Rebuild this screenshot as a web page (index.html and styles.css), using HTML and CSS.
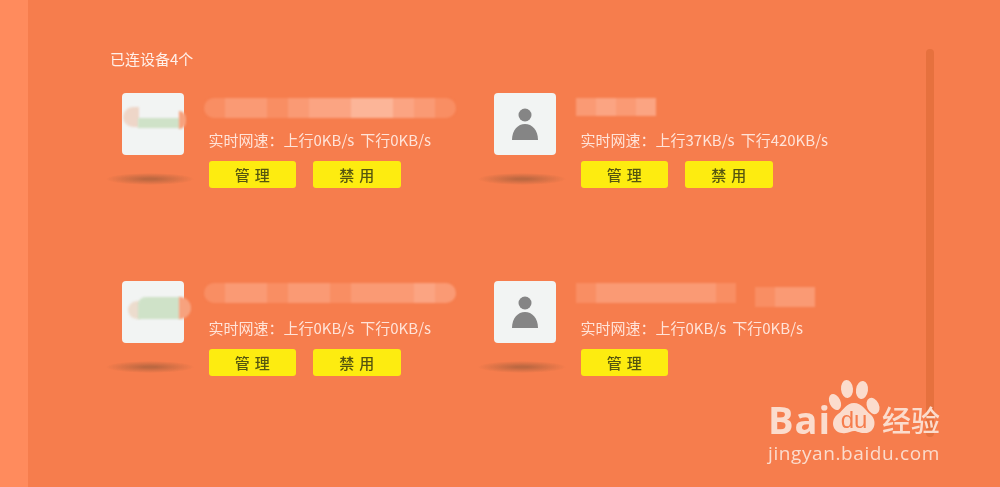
FILE: index.html
```html
<!DOCTYPE html>
<html>

<head>
  <title>已连设备</title>
  <meta name="viewport" content="width=device-width, initial-scale=1">
  <link rel="stylesheet" href="styles.css">
</head>

<body>
  <div class="strip"></div>
  <div class="main">
    <div class="content">
      <h1 class="count">已连设备4个</h1>
      <div class="devices">

        <div class="device">
          <div class="avatar-col">
            <div class="avatar">
              <span class="thumb-a"></span><span class="thumb-b"></span><span class="thumb-c"></span>
            </div>
            <div class="shadow"></div>
          </div>
          <div class="info">
            <div class="name name-one"><i class="l1"></i><i class="l2"></i><i class="l2"></i><i class="l1"></i><i class="l2"></i><i class="l3"></i><i class="l3"></i><i class="l4"></i><i class="l4"></i><i class="l3"></i><i class="l2"></i><i class="l1"></i></div>
            <p class="speed"><span>实时网速：</span><span>上行0KB/s</span><span class="down">下行0KB/s</span></p>
            <div class="actions"><button>管理</button><button>禁用</button></div>
          </div>
        </div>

        <div class="device">
          <div class="avatar-col">
            <div class="avatar">
              <svg class="person" viewBox="0 0 26 32"><circle cx="13" cy="7" r="6.5"/><path d="M0 32C0 22 6 16 13 16S26 22 26 32Z"/></svg>
            </div>
            <div class="shadow"></div>
          </div>
          <div class="info">
            <div class="name name-two"><i class="l2"></i><i class="l3"></i><i class="l2"></i><i class="l3"></i></div>
            <p class="speed"><span>实时网速：</span><span>上行37KB/s</span><span class="down">下行420KB/s</span></p>
            <div class="actions"><button>管理</button><button>禁用</button></div>
          </div>
        </div>

        <div class="device">
          <div class="avatar-col">
            <div class="avatar">
              <span class="thumb-d"></span><span class="thumb-e"></span><span class="thumb-f"></span>
            </div>
            <div class="shadow"></div>
          </div>
          <div class="info">
            <div class="name name-one name-up"><i class="l1"></i><i class="l2"></i><i class="l2"></i><i class="l1"></i><i class="l2"></i><i class="l2"></i><i class="l1"></i><i class="l2"></i><i class="l2"></i><i class="l2"></i><i class="l3"></i><i class="l2"></i></div>
            <p class="speed"><span>实时网速：</span><span>上行0KB/s</span><span class="down">下行0KB/s</span></p>
            <div class="actions"><button>管理</button><button>禁用</button></div>
          </div>
        </div>

        <div class="device">
          <div class="avatar-col">
            <div class="avatar">
              <svg class="person" viewBox="0 0 26 32"><circle cx="13" cy="7" r="6.5"/><path d="M0 32C0 22 6 16 13 16S26 22 26 32Z"/></svg>
            </div>
            <div class="shadow"></div>
          </div>
          <div class="info">
            <div class="name name-four name-up">
              <i class="l1"></i><i class="l2"></i><i class="l2"></i><i class="l2"></i><i class="l2"></i><i class="l2"></i><i class="l2"></i><i class="l1"></i>
              <i class="gap"></i><i class="low l1"></i><i class="low l2"></i><i class="low l2"></i>
            </div>
            <p class="speed"><span>实时网速：</span><span>上行0KB/s</span><span class="down">下行0KB/s</span></p>
            <div class="actions"><button>管理</button></div>
          </div>
        </div>

      </div>
    </div>
    <div class="scrollbar"></div>
  </div>

  <!-- watermark -->
  <div class="mark">
    <div class="mark-top">
      <span class="bai">Bai</span>
      <span class="paw">
        <svg viewBox="0 0 60 62" width="60" height="62">
          <ellipse cx="11" cy="24" rx="5.5" ry="8.5" transform="rotate(-25 11 24)"/>
          <ellipse cx="23" cy="11" rx="6" ry="9" transform="rotate(-5 23 11)"/>
          <ellipse cx="38" cy="12" rx="6" ry="9" transform="rotate(8 38 12)"/>
          <ellipse cx="49" cy="28" rx="6" ry="8.5" transform="rotate(-25 49 28)"/>
          <path d="M30 25C38 25 41 32 46 36C54 42 51 56 40 55C35 55 33 53 30 53C27 53 24 56 18 55C8 54 6 42 14 36C20 32 22 25 30 25Z"/>
        </svg>
        <span class="du">du</span>
      </span>
      <span class="jy">经验</span>
    </div>
    <div class="mark-url">jingyan.baidu.com</div>
  </div>
</body>

</html>
```

FILE: styles.css
```css
body {
  margin: 0;
  height: 487px;
  display: flex;
  overflow: hidden;
  background-color: #f67d4d;
  font-family: "Noto Sans CJK SC", "Liberation Sans", sans-serif;
  color: #ffe3d8;
}

.strip {
  width: 28px;
  flex-shrink: 0;
  background-color: #ff8b5d;
}

.main {
  flex-grow: 1;
  display: flex;
  padding-top: 49px;
  align-items: flex-start;
}

.content {
  width: 816px;
  margin-left: 82px;
  flex-shrink: 0;
  filter: blur(0.4px);
}

.scrollbar {
  width: 8px;
  height: 388px;
  border-radius: 4px;
  background-color: #e6713e;
  filter: blur(0.5px);
}

.count {
  margin: 0 0 24px;
  font-size: 15px;
  line-height: 20px;
  font-weight: 400;
  color: #fff0ea;
}

.devices {
  display: grid;
  grid-template-columns: 372px 372px;
  grid-auto-rows: 188px;
  margin-left: -2px;
}

.device {
  display: flex;
}

.avatar-col {
  width: 100.5px;
  flex-shrink: 0;
}

.avatar {
  position: relative;
  width: 62px;
  height: 62px;
  margin-left: 14px;
  border-radius: 4px;
  background-color: #f2f4f3;
  display: flex;
  justify-content: center;
  align-items: center;
}

.person {
  width: 26px;
  height: 32px;
  fill: #858585;
}

.shadow {
  width: 88px;
  height: 12px;
  margin: 18px 0 0 -2px;
  border-radius: 50%;
  background: radial-gradient(closest-side, #bd6841 15%, rgba(189, 104, 65, 0));
}

/* blurred pictures on the device tiles */
.avatar span {
  position: absolute;
  filter: blur(0.8px);
}

.thumb-a {
  left: 1px;
  top: 14px;
  width: 16px;
  height: 20px;
  border-radius: 10px 0 0 10px;
  background-color: #eed6c8;
}

.thumb-b {
  left: 16px;
  top: 25px;
  width: 42px;
  height: 10px;
  background-color: #cfe2c8;
}

.thumb-c {
  left: 57px;
  top: 18px;
  width: 7px;
  height: 18px;
  border-radius: 0 9px 9px 0;
  background-color: #f7a27e;
}

.thumb-d {
  left: 6px;
  top: 20px;
  width: 12px;
  height: 18px;
  border-radius: 9px 0 0 9px;
  background-color: #ecdccd;
}

.thumb-e {
  left: 16px;
  top: 16px;
  width: 42px;
  height: 22px;
  border-radius: 8px 0 0 0;
  background-color: #cfe2c8;
}

.thumb-f {
  left: 57px;
  top: 16px;
  width: 12px;
  height: 22px;
  border-radius: 0 11px 11px 0;
  background-color: #f7a27e;
}

.info {
  flex-grow: 1;
}

/* mosaic over the device names */
.name {
  display: flex;
  height: 20px;
  margin: 5px 0 0 -5px;
  filter: blur(1px);
}

.name-up {
  margin-top: 2px;
  margin-bottom: 3px;
}

.name i {
  display: block;
  width: 21px;
  height: 20px;
}

.name-one i:first-child {
  border-radius: 10px 0 0 10px;
}

.name-one i:last-child {
  border-radius: 0 10px 10px 0;
}

.name-two {
  margin-left: -5px;
}

.name-two i {
  width: 20px;
  height: 18px;
}

.name-four {
  margin-left: -5px;
}

.name-four i {
  width: 20px;
}

.name-four .gap {
  width: 19px;
}

.name-four .low {
  margin-top: 4px;
}

.l1 {
  background-color: #f98e63;
}

.l2 {
  background-color: #fa9a74;
}

.l3 {
  background-color: #fba482;
}

.l4 {
  background-color: #fcb598;
}

.speed {
  margin: 0;
  padding-top: 11px;
  font-size: 15px;
  line-height: 22px;
  white-space: nowrap;
}

.down {
  margin-left: 6px;
}

.actions {
  display: flex;
  gap: 17px;
  margin-top: 10px;
}

button {
  width: 87.5px;
  height: 27px;
  padding: 0;
  border: none;
  border-radius: 3px;
  background-color: #fdec10;
  color: #55550f;
  font-family: "Noto Sans CJK SC", sans-serif;
  font-size: 15px;
  font-weight: 500;
  letter-spacing: 5px;
  text-indent: 5px;
}

/* watermark, sits over the page */
.mark {
  position: absolute;
  left: 768px;
  top: 380px;
  width: 180px;
  color: #fbdccd;
  filter: blur(0.3px);
}

.mark-top {
  display: flex;
  align-items: flex-end;
  height: 60px;
}

.bai {
  font-family: "Open Sans", sans-serif;
  font-size: 38px;
  line-height: 46px;
  font-weight: 700;
  letter-spacing: 1px;
  width: 56px;
  margin-bottom: -2px;
}

.paw {
  position: relative;
  width: 60px;
  height: 62px;
  flex-shrink: 0;
}

.paw svg {
  display: block;
  fill: #fbdccd;
}

.du {
  position: absolute;
  left: 14px;
  top: 26px;
  width: 32px;
  text-align: center;
  font-family: "Liberation Sans", sans-serif;
  font-size: 24px;
  line-height: 32px;
  color: #f67d4d;
}

.jy {
  font-size: 29px;
  line-height: 36px;
  font-weight: 500;
  margin-left: -2px;
  white-space: nowrap;
  margin-bottom: 3px;
}

.mark-url {
  font-family: "Open Sans", sans-serif;
  font-size: 19px;
  line-height: 26px;
  letter-spacing: 0.6px;
  white-space: nowrap;
}
```
